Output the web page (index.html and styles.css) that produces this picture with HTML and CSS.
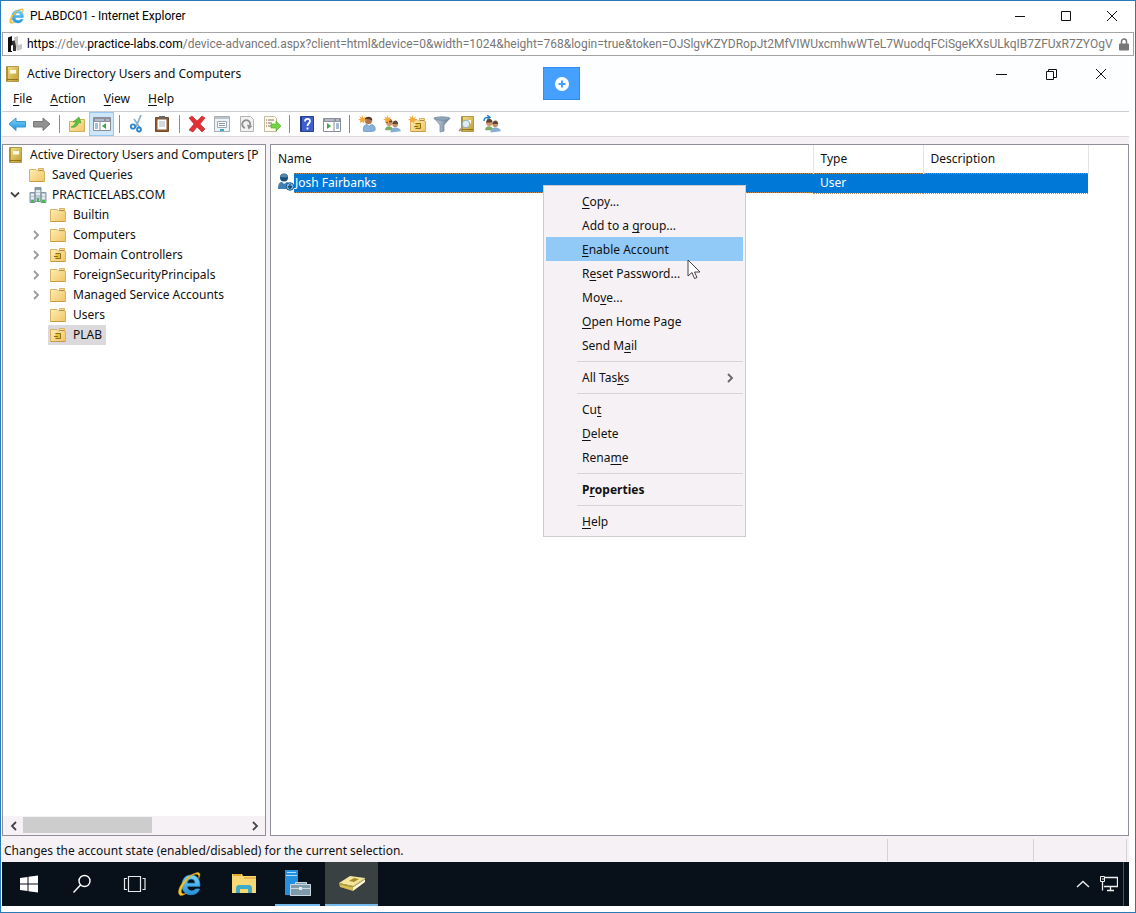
FILE: index.html
```html
<!DOCTYPE html>
<html lang="en">
<head>
<meta charset="utf-8">
<title>PLABDC01 - Internet Explorer</title>
<link rel="stylesheet" href="styles.css">
</head>
<body>
<svg class="defs" aria-hidden="true">
  <defs>
    <linearGradient id="gold" x1="0" y1="0" x2="1" y2="1"><stop offset="0" stop-color="#fff0b4"/><stop offset="1" stop-color="#f0c468"/></linearGradient>
    <linearGradient id="brass" x1="0" y1="0" x2="1" y2="1"><stop offset="0" stop-color="#f3e08a"/><stop offset="1" stop-color="#c09a30"/></linearGradient>
    <linearGradient id="sky" x1="0" y1="0" x2="0" y2="1"><stop offset="0" stop-color="#7cd6fc"/><stop offset="1" stop-color="#1f8fda"/></linearGradient>
    <linearGradient id="steel" x1="0" y1="0" x2="1" y2="0"><stop offset="0" stop-color="#d5dde4"/><stop offset="1" stop-color="#5d748a"/></linearGradient>
    <symbol id="folder" viewBox="0 0 16 16"><path d="M.5 2.500h6.500l1.500 1.500h1v-2.500h5v3h1v10H.5z" fill="url(#gold)" stroke="#d9b162"/><path d="M10 3.500h4" stroke="#a88a4c"/><path d="M1 14.500h14" stroke="#c79b46"/></symbol>
    <symbol id="ou" viewBox="0 0 16 16"><use href="#folder"/><path d="M5.500 6.500h5v5h-5M4 9.500h4" fill="#e8c03a" stroke="#8a6f18"/></symbol>
    <symbol id="book" viewBox="0 0 16 16"><path d="M1.500.5h12v15h-12z" fill="url(#brass)" stroke="#b09a4c"/><path d="M2 1v14" stroke="#b0912f" stroke-width="2"/><path d="M5 4h6v3.500H5z" fill="#fffbe0"/><path d="M2 13.500h11" stroke="#8f7420"/></symbol>
    <symbol id="ie" viewBox="0 0 24 24"><path d="M20.500 14H9.500c.2 2.500 1.700 3.900 4 3.900 1.500 0 2.500-.5 3.300-1.600h3.400c-1.200 3.200-3.700 4.900-7 4.900-4.900 0-8.100-3.200-8.100-8.200 0-5.200 3.200-8.700 8-8.700 4.700 0 7.600 3.500 7.400 9.700zM9.600 11.300h6.800c-.2-2.200-1.300-3.500-3.300-3.500-2 0-3.200 1.300-3.500 3.500z" fill="url(#sky)" stroke="#2f9fe2" stroke-width=".6"/><path d="M19.500 7.500c2-4 1-6-2.500-5C9.500 4.500.5 15 2.500 20.500c1 2.300 4 1.200 6.500-.5-4 1.200-5.200-.5-4-4C6.800 11 12 5 16.500 3.700c2.500-.6 3.300.7 3 3.800z" fill="#f7c52c" stroke="#d59c14" stroke-width=".4"/></symbol>
    <symbol id="person" viewBox="0 0 12 14"><path d="M1 13c0-4 1-5.500 3.500-5.500L6 9l2-1.500c2.500 0 3.500 2 3.500 4.500 0 2-10.500 3-10.500 1z" fill="#86b2dc" stroke="#6a91b8" stroke-width=".6"/><circle cx="5.500" cy="4" r="3.200" fill="#ad7550"/><path d="M2 4C1.500 0 9-1 9 4 7 2.800 5 2.800 3.500 2.500z" fill="#513625"/></symbol>
    <symbol id="people" viewBox="0 0 16 13"><circle cx="5" cy="4" r="3" fill="#ce986b"/><path d="M2 4c0-5 6-5 6-.5z" fill="#61442f"/><path d="M1 11c0-5 7-5 8 0z" fill="#7dab66"/><circle cx="10.500" cy="5.500" r="2.600" fill="#c98d64"/><path d="M7.800 5c1-4.500 5.500-4 5.500 0z" fill="#614535"/><path d="M6 13c0-6 9-6 10-1z" fill="#86add4"/></symbol>
    <symbol id="star" viewBox="0 0 10 10"><path d="m5 0 1 3.400L9 2 7.200 4.500 10 6 6.800 6.500 7 10 4.800 7.500 2 9l.8-3L0 5l3-.8L1.500 1 4.300 3z" fill="#f7a737"/></symbol>
    <symbol id="chev" viewBox="0 0 8 10"><path d="m2 1 4 4-4 4" fill="none" stroke="currentColor" stroke-width="1.800"/></symbol>
  </defs>
</svg>

<div class="window">
  <header class="titlebar">
    <svg class="i18"><use href="#ie"/></svg>
    <span class="title">PLABDC01 - Internet Explorer</span>
    <div class="controls">
      <button aria-label="Minimize"><svg class="i12" viewBox="0 0 12 12"><path d="M1 6.500h10"/></svg></button>
      <button aria-label="Maximize"><svg class="i12" viewBox="0 0 12 12"><path d="M1.500 1.500h9v9h-9z"/></svg></button>
      <button aria-label="Close"><svg class="i12" viewBox="0 0 12 12"><path d="m1 1 10 10M11 1 1 11"/></svg></button>
    </div>
  </header>

  <div class="address">
    <svg class="i16" viewBox="0 0 16 16"><path d="M2 1.500 6 0v16H2z" fill="#111"/><path d="m6 5 4-1v11H6z" fill="#333"/><path d="M8 1.500 12 0v9l4-1v5l-5 2z" fill="#c4c4c4"/><path d="M5 9.500 7 9v6H5z" fill="#fff"/></svg>
    <div class="url"><b>https</b>://dev.<b>practice-labs.com</b>/device-advanced.aspx?client=html&amp;device=0&amp;width=1024&amp;height=768&amp;login=true&amp;token=OJSlgvKZYDRopJt2MfVIWUxcmhwWTeL7WuodqFCiSgeKXsULkqIB7ZFUxR7ZYOgV</div>
    <svg class="lock" viewBox="0 0 10 13"><path d="M2.500 6V3.500a2.500 2.500 0 0 1 5 0V6" fill="none" stroke="#777" stroke-width="1.500"/><rect y="5.500" width="10" height="7" rx="1" fill="#777"/></svg>
  </div>

  <main class="remote">
    <div class="apptitle">
      <svg class="i16"><use href="#book"/></svg>
      <span class="title">Active Directory Users and Computers</span>
      <div class="controls wide">
        <button aria-label="Minimize"><svg class="i12" viewBox="0 0 12 12"><path d="M1 6.500h11"/></svg></button>
        <button aria-label="Restore"><svg class="i12" viewBox="0 0 12 12"><path d="M1.500 3.500h7v8h-7zM3.500 3V1.500h8v8H9"/></svg></button>
        <button aria-label="Close"><svg class="i12" viewBox="0 0 12 12"><path d="m1 1 10 10M11 1 1 11"/></svg></button>
      </div>
    </div>
    <nav class="menubar">
      <button><u>F</u>ile</button><button><u>A</u>ction</button><button><u>V</u>iew</button><button><u>H</u>elp</button>
    </nav>

    <div class="toolbar">
      <button aria-label="Back"><svg class="i18" viewBox="0 0 18 18"><path d="M1 9 8 3v3.500h9.500v5.500H8v3.500z" fill="url(#sky)" stroke="#3c97cc"/></svg></button>
      <button aria-label="Forward"><svg class="i18" viewBox="0 0 18 18"><path d="m17 9-7-6v3.500H.5v5.500H10v3.500z" fill="#929292" stroke="#777"/></svg></button>
      <i class="sep"></i>
      <button aria-label="Up one level"><svg class="i18" viewBox="0 0 18 18"><path d="M1.500 6.500h7l1-2h7v12h-15z" fill="url(#gold)" stroke="#d0ae5c"/><path d="M3 12c3-1 4-3 5-5H5l6-5 2 6-2-.5c-2 4-4 5.500-8 4.500z" fill="#5cc03c" stroke="#46a02c" stroke-width=".6"/></svg></button>
      <button class="on" aria-label="Show console tree"><svg class="i18" viewBox="0 0 18 18"><path d="M.5 2.500h17v13H.5z" fill="#fff" stroke="#8a8e99"/><path d="M1 3h16v4H1z" fill="#8d929e"/><path d="M2 5h9M13 5h3" stroke="#dbe2ea"/><path d="M7 7v8" stroke="#8a8e99"/><path d="M2 9h3M2 11h3M2 13h3" stroke="#4f78ad"/><path d="M13 8v6l-4-3z" fill="#42a53c"/></svg></button>
      <i class="sep"></i>
      <button aria-label="Cut"><svg class="i18" viewBox="0 0 18 18"><path d="m13 0-5 12M6 4l6 9" stroke="#8cb2d0" stroke-width="1.800"/><circle cx="5" cy="11.500" r="2.200" fill="none" stroke="#2c86cc" stroke-width="1.800"/><circle cx="11" cy="14.500" r="2" fill="none" stroke="#2c86cc" stroke-width="1.800"/></svg></button>
      <button aria-label="Paste"><svg class="i18" viewBox="0 0 18 18"><path d="M2.500 2.500h13v14h-13z" fill="#8a5a34" stroke="#754c2a"/><path d="M4.500 4.500h9v10h-9z" fill="#fff"/><path d="M6 1h6v3H6z" fill="#666"/><path d="M6 7h6M6 9h6M6 11h6" stroke="#aab4bd"/></svg></button>
      <i class="sep"></i>
      <button aria-label="Delete"><svg class="i18" viewBox="0 0 18 18"><path d="m1 3 3-2 5 5 5-5 3 2-5 6 5 5-3 3-5-5-4 5-4-2 5-6z" fill="#e03134" stroke="#bd1c22" stroke-width=".6"/></svg></button>
      <button aria-label="Properties"><svg class="i18" viewBox="0 0 18 18"><path d="M1.500 1.500h15v15h-15z" fill="#eff2f4" stroke="#a8afb5"/><path d="M2 3h14" stroke="#bcc4ca" stroke-width="2"/><path d="M4.500 6.500h9v6h-9z" fill="#fff" stroke="#9da8b0"/><path d="M6 8.500h6M6 10.500h6" stroke="#8d99a3"/><path d="M7 15h4" stroke="#3ba9c7" stroke-width="2"/></svg></button>
      <button aria-label="Refresh"><svg class="i18" viewBox="0 0 18 18"><path d="M2.500 1.500h10l3 3v12h-13z" fill="#f2f2f2" stroke="#b4b4b4"/><path d="M7 13a4 4 0 1 1 5-2.500" fill="none" stroke="#8f8f8f" stroke-width="1.800"/><path d="m9 9.500 1.500 5 4-3.500z" fill="#8f8f8f"/></svg></button>
      <button aria-label="Export list"><svg class="i18" viewBox="0 0 18 18"><path d="M1.500 1.500h10l2 2v13h-12z" fill="#fffbe6" stroke="#c2bca2"/><path d="M3 5h1M3 8h1M3 11h1" stroke="#bb513e"/><path d="M5 5h6M5 8h4M5 11h4" stroke="#777"/><path d="M8 9h5V6l5 5-5 5v-3H8z" fill="#74d443" stroke="#4bab2c" stroke-width=".6"/></svg></button>
      <i class="sep"></i>
      <button aria-label="Help"><svg class="i18" viewBox="0 0 18 18"><path d="M2.500 1.500h13v15h-13z" fill="#3f60cc" stroke="#2b4192"/><path d="M3 2v14" stroke="#263a8c" stroke-width="2"/><path d="M7 6.500C7 3 12 3 12 6.300c0 2-2.500 2-2.500 4.700M9.500 12.500v2" fill="none" stroke="#fff" stroke-width="1.800"/></svg></button>
      <button aria-label="Show action pane"><svg class="i18" viewBox="0 0 18 18"><path d="M.5 3.500h17v13H.5z" fill="#fff" stroke="#8a8e99"/><path d="M1 4h16v3H1z" fill="#8d929e"/><path d="M2 5h9M13 5h3" stroke="#dbe2ea"/><path d="M11 7v9" stroke="#8a8e99"/><path d="M13 9h3M13 11h3M13 13h3" stroke="#4f78ad"/><path d="M4 8v6l4-3z" fill="#42a53c"/></svg></button>
      <i class="sep"></i>
      <button aria-label="New user"><svg class="i18" viewBox="0 0 18 18"><use href="#person" x="4" y="1" width="14" height="16"/><use href="#star" width="9" height="9"/></svg></button>
      <button aria-label="New group"><svg class="i18" viewBox="0 0 18 18"><use href="#people" x="1" y="3" width="17" height="15"/><use href="#star" width="9" height="9"/></svg></button>
      <button aria-label="New organizational unit"><svg class="i18" viewBox="0 0 18 18"><use href="#ou" x="2" y="2" width="16" height="16"/><use href="#star" width="9" height="9"/></svg></button>
      <button aria-label="Filter"><svg class="i18" viewBox="0 0 18 18"><path d="M1 3h16l-6 7v6l-4 1v-7z" fill="url(#steel)" stroke="#71869a" stroke-width=".7"/><ellipse cx="9" cy="3.500" rx="8" ry="1.800" fill="#8ea4b7" stroke="#71869a" stroke-width=".6"/></svg></button>
      <button aria-label="Find"><svg class="i18" viewBox="0 0 18 18"><use href="#book" x="2" y="1" width="16" height="16"/><circle cx="8" cy="9" r="3.800" fill="#dceef4" stroke="#93a9b0"/><path d="m5 12-4 4" stroke="#a79c80" stroke-width="2"/></svg></button>
      <button aria-label="Add to group"><svg class="i18" viewBox="0 0 18 18"><use href="#people" x="1" y="3" width="17" height="15"/><path d="M1 6c0-3 2-4 5-3.500M4 0l3 2.500-3 2" fill="none" stroke="#267fc3" stroke-width="1.500"/></svg></button>
    </div>

    <div class="panes">
      <section class="tree">
        <ul>
          <li class="root"><svg class="i16"><use href="#book"/></svg><span class="clip">Active Directory Users and Computers [P</span></li>
          <li class="l1"><i class="tw"></i><svg class="i16"><use href="#folder"/></svg><span>Saved Queries</span></li>
          <li class="l1"><i class="tw"><svg class="down" viewBox="0 0 10 8"><path d="m1 1.500 4 4 4-4" fill="none" stroke="#444" stroke-width="1.800"/></svg></i><svg class="i18 dom" viewBox="0 0 18 18"><path d="M1 6.500h5v10H1zM6 1.500h6v14H6zM12 6.500h5v10h-5z" fill="#b9c8d2" stroke="#8596a2"/><path d="M7 5h4M7 8h4M2 9h3M2 12h3M13 9h3M13 12h3" stroke="#eff6f8" stroke-width="1.500"/><path d="M6 3h6" stroke="#59707f"/><path d="M2 14h3v3H2zM8 12h2v4H8zM13 14h3v3h-3z" fill="#4cb356"/></svg><span>PRACTICELABS.COM</span></li>
          <li class="l2"><i class="tw"></i><svg class="i16"><use href="#folder"/></svg><span>Builtin</span></li>
          <li class="l2"><i class="tw"><svg class="chev"><use href="#chev"/></svg></i><svg class="i16"><use href="#folder"/></svg><span>Computers</span></li>
          <li class="l2"><i class="tw"><svg class="chev"><use href="#chev"/></svg></i><svg class="i16"><use href="#ou"/></svg><span>Domain Controllers</span></li>
          <li class="l2"><i class="tw"><svg class="chev"><use href="#chev"/></svg></i><svg class="i16"><use href="#folder"/></svg><span>ForeignSecurityPrincipals</span></li>
          <li class="l2"><i class="tw"><svg class="chev"><use href="#chev"/></svg></i><svg class="i16"><use href="#folder"/></svg><span>Managed Service Accounts</span></li>
          <li class="l2"><i class="tw"></i><svg class="i16"><use href="#folder"/></svg><span>Users</span></li>
          <li class="l2"><i class="tw"></i><div class="sel"><svg class="i16"><use href="#ou"/></svg><span>PLAB</span></div></li>
        </ul>
        <div class="scroll">
          <button aria-label="Scroll left"><svg class="chev flip"><use href="#chev"/></svg></button>
          <div class="track"><div class="thumb"></div></div>
          <button aria-label="Scroll right"><svg class="chev"><use href="#chev"/></svg></button>
        </div>
      </section>

      <section class="list">
        <table>
          <colgroup><col class="c-name"><col class="c-type"><col class="c-desc"></colgroup>
          <thead><tr><th>Name</th><th>Type</th><th>Description</th></tr></thead>
          <tbody><tr>
            <td class="namecell"><div class="name"><svg class="user" viewBox="0 0 16 18"><circle cx="6" cy="4.500" r="4" fill="#174f7a"/><path d="M2 3.500c1-3 6-4 8 0-2 1.500-6 1-8 0z" fill="#5189b3"/><path d="M0 16c0-6 2-7 4-7l2 2 3-2c3 1 4 3 4 7z" fill="#3f80b4"/><circle cx="12" cy="13.500" r="3.800" fill="#8dbde0" stroke="#155a92"/><path d="M12 11v3M10 13l2 2.500 2-2.500" fill="none" stroke="#124c7d" stroke-width="1.300"/></svg><span class="hl">Josh Fairbanks</span></div></td>
            <td class="hl">User</td><td class="hl"></td>
          </tr></tbody>
        </table>
      </section>
    </div>

    <footer class="status"><span class="msg">Changes the account state (enabled/disabled) for the current selection.</span><i class="s1"></i><i class="s2"></i></footer>

    <div class="taskbar">
      <button aria-label="Start"><svg class="i18" viewBox="0 0 18 18"><path d="m0 3 7.500-1v6.500H0zM8.500 1.800 18 .5v8H8.500zM0 9.500h7.500V16L0 15zM8.500 9.500H18v8l-9.500-1.300z" fill="#fff"/></svg></button>
      <button aria-label="Search"><svg class="i20" viewBox="0 0 20 20"><circle cx="12.500" cy="7" r="5.500" fill="none" stroke="#fff" stroke-width="1.400"/><path d="m8.500 11-7 7.500" stroke="#fff" stroke-width="1.400"/></svg></button>
      <button aria-label="Task View"><svg class="tv" viewBox="0 0 24 18"><path d="M5.500 1.500h12v15h-12zM4 3.500H1.500v11H4M19.500 3.500H22v11h-2.500" fill="none" stroke="#e5e8ea" stroke-width="1.200"/></svg></button>
      <div class="apps">
        <button aria-label="Internet Explorer"><svg class="i28"><use href="#ie"/></svg></button>
        <button aria-label="File Explorer"><svg class="i24" viewBox="0 0 24 24"><path d="M0 2h10l1 2h13v17H0z" fill="#f8d775"/><path d="M1 2h8v2H1z" fill="#e4a92c"/><path d="M12 5h12v2H12z" fill="#e9b84a"/><path d="M4 21v-6l2-2h12l2 2v6h-4v-4H8v4z" fill="#3eacc9"/></svg></button>
        <button class="run" aria-label="Server Manager"><svg class="i28" viewBox="0 0 28 28"><path d="M1 1h13v25H1z" fill="#2491df"/><path d="M2 6.500h11M3 3.500h9" stroke="#afdefa"/><path d="M6 15h5v-2h12v2h4v12H6z" fill="#7f9aab"/><path d="M6.500 15.500h20v11h-20zM6 19.500h21M11.500 15v-1.500h11V15" fill="none" stroke="#c9d8e1"/><path d="M15 18h3v3h-3z" fill="#dfe8ed"/></svg></button>
        <button class="run cur" aria-label="Active Directory Users and Computers"><svg class="i28" viewBox="0 0 28 28"><path d="m1 14 11-7 15 2-12 8z" fill="#f5e79a"/><path d="m1 14 14 3v5L2 18z" fill="#d5bf52"/><path d="m15 17 12-8v4l-12 9z" fill="#fffbd6"/><path d="m2 15 13 3 12-8" fill="none" stroke="#a28f3c"/><path d="m11 12 5-3 5 1-5 3z" fill="#a28a2c"/></svg></button>
      </div>
      <div class="tray">
        <svg class="up" viewBox="0 0 14 8"><path d="m1 7 6-5.500L13 7" fill="none" stroke="#e8e8e8" stroke-width="1.500"/></svg>
        <svg class="i18" viewBox="0 0 18 18"><path d="M5 2.500h12.500v9H4M10.500 12v3M7 15.500h7M2.500 6v9.500" fill="none" stroke="#f0f0f0" stroke-width="1.300"/><path d="M.5 1.500h4v5h-4zM2 4h2" fill="none" stroke="#f0f0f0"/></svg>
        <i class="peek"></i>
      </div>
    </div>
  </main>

  <button class="plus" aria-label="Open lab toolbar"><svg class="i14" viewBox="0 0 14 14"><circle cx="7" cy="7" r="7" fill="#fff"/><path d="M7 3.500v7M3.500 7h7" stroke="#45a0ff" stroke-width="2"/></svg></button>

  <div class="menu" role="menu">
    <button role="menuitem"><u>C</u>opy...</button>
    <button role="menuitem">Add to a <u>g</u>roup...</button>
    <button role="menuitem" class="hover"><u>E</u>nable Account</button>
    <button role="menuitem">R<u>e</u>set Password...</button>
    <button role="menuitem">Mo<u>v</u>e...</button>
    <button role="menuitem"><u>O</u>pen Home Page</button>
    <button role="menuitem">Send M<u>a</u>il</button>
    <hr>
    <button role="menuitem"><span>All Tas<u>k</u>s</span><svg class="chev"><use href="#chev"/></svg></button>
    <hr>
    <button role="menuitem">Cu<u>t</u></button>
    <button role="menuitem"><u>D</u>elete</button>
    <button role="menuitem">Rena<u>m</u>e</button>
    <hr>
    <button role="menuitem" class="strong">P<u>r</u>operties</button>
    <hr>
    <button role="menuitem"><u>H</u>elp</button>
  </div>
  <svg class="cursor" viewBox="0 0 14 21"><path d="M1 1v16l4-3.500 2.500 6 2.500-1-2.500-5.500H13z" fill="#fff" stroke="#444"/></svg>
</div>
</body>
</html>
```

FILE: styles.css
```css
* { box-sizing: border-box; }
body { margin: 0; font: 12px/16px "Noto Sans", "Open Sans", sans-serif; color: #111; }
button { font: inherit; color: inherit; background: none; border: 0; padding: 0; margin: 0; display: flex; align-items: center; justify-content: center; }
svg { display: block; flex: none; }
u { text-underline-offset: 2px; text-decoration-skip-ink: none; }
.defs { position: absolute; width: 0; height: 0; }
.i12 { width: 12px; height: 12px; }
.i14 { width: 14px; height: 14px; }
.i16 { width: 16px; height: 16px; }
.i18 { width: 18px; height: 18px; }
.i20 { width: 20px; height: 20px; }
.i24 { width: 24px; height: 24px; }
.i28 { width: 28px; height: 28px; }
.chev { width: 8px; height: 10px; }
.flip { transform: scaleX(-1); }

.window { position: relative; display: flex; flex-direction: column; min-height: 100vh; border: 1px solid #2a7ab5; background: #fff; }
.titlebar, .address { font-family: Roboto, "Open Sans", sans-serif; }
.titlebar { display: flex; align-items: center; gap: 4px; height: 30px; padding-left: 7px; color: #000; }
.title { flex: 1; }
.controls { display: flex; }
.controls button { width: 46px; height: 30px; }
.controls path { fill: none; stroke: #111; }
.controls.wide button { width: 50px; }

.address { display: flex; align-items: center; gap: 5px; height: 24px; margin: 1px 1px 0; padding: 0 4px 0 3px; border: 1px solid #a5a5a5; }
.url { flex: 1; min-width: 0; overflow: hidden; white-space: nowrap; color: #777; }
.url b { font-weight: 400; color: #000; }
.lock { width: 10px; height: 13px; }

.remote { flex: 1; display: flex; flex-direction: column; margin: 0 6px 6px 1px; background: #f5f1f5; min-height: 0; }
.apptitle { display: flex; align-items: center; gap: 6px; height: 35px; padding: 0 3px; background: #fdfeff; }
.menubar { display: flex; gap: 18px; height: 21px; padding: 0 11px 4px; background: #fdfeff; border-bottom: 1px solid #ccccd2; }
.toolbar { display: flex; align-items: center; height: 25px; padding-left: 2px; background: #fff; border-bottom: 1px solid #dcd9dc; }
.toolbar button { width: 25px; height: 24px; }
.toolbar .on { background: #cde6fa; border: 1px solid #98c8ee; }
.sep { width: 1px; height: 18px; margin: 0 4px 0 5px; background: #8c8c8c; }

.panes { flex: 1; display: flex; gap: 4px; padding-top: 7px; min-height: 0; }
.tree, .list { background: #fff; border: 1px solid #8f8f9c; min-width: 0; }
.tree { width: 264px; flex: none; display: flex; flex-direction: column; }
.tree ul { flex: 1; list-style: none; margin: 0; padding: 0; overflow: hidden; }
.tree li { display: flex; align-items: center; gap: 7px; height: 20px; white-space: nowrap; }
.tree .root { padding-left: 5px; gap: 6px; }
.clip { flex: 1; min-width: 0; overflow: hidden; }
.l1 { padding-left: 5px; }
.l2 { padding-left: 26px; }
.tw { display: flex; justify-content: center; flex: none; width: 14px; color: #999; }
.down { width: 10px; height: 8px; }
.dom { margin-right: -2px; }
.sel { display: flex; align-items: center; gap: 7px; height: 20px; margin-left: -2px; padding: 0 4px 0 2px; background: #dcd9dc; }
.scroll { display: flex; height: 19px; background: #f5f1f5; padding: 1px; color: #444; }
.scroll button { width: 19px; }
.track { flex: 1; }
.thumb { width: 58%; height: 16px; background: #cdcdcd; }

.list { flex: 1; }
table { border-collapse: collapse; table-layout: fixed; width: 817px; }
.c-name { width: 542px; }
.c-type { width: 110px; }
.c-desc { width: 165px; }
th { height: 28px; padding: 0 7px; text-align: left; font-weight: 400; border-right: 1px solid #e3e3e3; }
td { height: 20px; padding: 0 7px; }
.namecell { padding: 0; }
.name { display: flex; height: 20px; padding-left: 7px; }
.user { width: 16px; height: 18px; }
.name .hl { flex: 1; padding: 0 1px; line-height: 18px; }
.hl { background: #0078d7; color: #fff; border-top: 1px dotted #b98a5a; border-bottom: 1px dotted #b98a5a; }

.status { display: flex; height: 26px; padding: 3px 2px 1px; }
.msg { flex: 1; line-height: 23px; }
.status i { border-left: 1px solid #d5d1d5; }
.s1 { width: 146px; }
.s2 { width: 94px; border-right: 1px solid #d5d1d5; }

.taskbar { display: flex; height: 44px; background: #08101a; }
.taskbar button { width: 53px; height: 44px; }
.tv { width: 24px; height: 18px; }
.apps { display: flex; gap: 1px; margin-left: 2px; flex: 1; }
.taskbar .run { border-bottom: 2px solid #76b9ed; }
.apps .run:not(.cur) { width: 45px; margin: 0 4px; }
.apps .cur { background: #3a4143; }
.tray { display: flex; align-items: center; gap: 10px; }
.up { width: 14px; height: 8px; }
.peek { width: 6px; height: 44px; margin-left: -5px; border-left: 1px solid #4a5259; }

.plus { position: absolute; left: 542px; top: 66px; width: 37px; height: 33px; background: #45a0ff; border: 1px solid #2f8cf0; }
.menu { position: absolute; left: 542px; top: 184px; width: 203px; padding: 3px 2px; background: #f5f1f5; border: 1px solid #ccc; }
.menu button { width: 100%; height: 24px; padding: 1px 9px 0 36px; justify-content: flex-start; white-space: pre; }
.menu .hover { background: #91c9f7; }
.menu .strong { font-weight: 700; }
.menu .chev { margin-left: auto; color: #666; }
.menu hr { height: 1px; margin: 4px 0 3px 31px; border: 0; background: #d6d3d6; }
.cursor { position: absolute; left: 686px; top: 258px; width: 14px; height: 21px; }
```
